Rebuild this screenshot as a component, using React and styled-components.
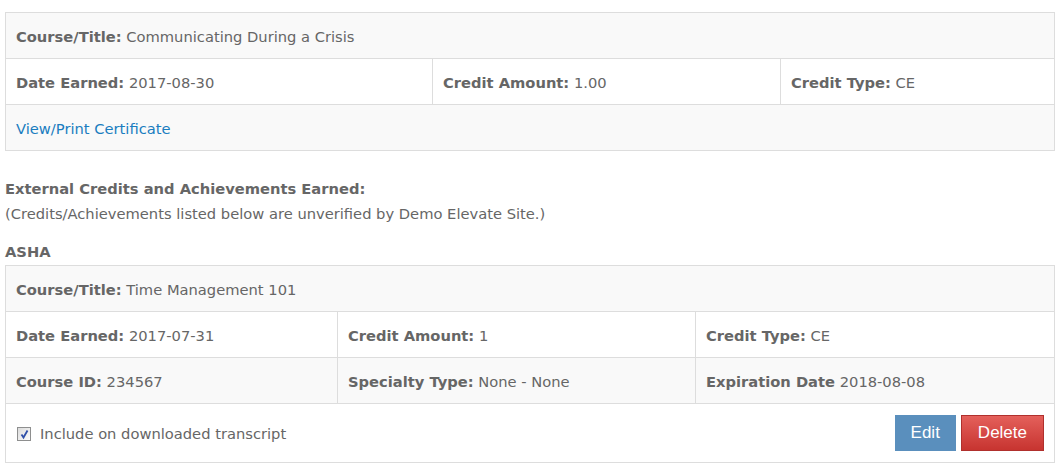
import React from "react";
import styled, { createGlobalStyle } from "styled-components";

const GlobalStyle = createGlobalStyle`
  body {
    margin: 0;
    background: #ffffff;
    font-family: "DejaVu Sans", Verdana, sans-serif;
    font-size: 14.7px;
    color: #666666;
  }
`;

const firstTable = [
  [{ label: "Course/Title:", value: "Communicating During a Crisis" }],
  [
    { label: "Date Earned:", value: "2017-08-30" },
    { label: "Credit Amount:", value: "1.00" },
    { label: "Credit Type:", value: "CE" },
  ],
];

const ashaRows = [
  [{ label: "Course/Title:", value: "Time Management 101" }],
  [
    { label: "Date Earned:", value: "2017-07-31" },
    { label: "Credit Amount:", value: "1" },
    { label: "Credit Type:", value: "CE" },
  ],
  [
    { label: "Course ID:", value: "234567" },
    { label: "Specialty Type:", value: "None - None" },
    { label: "Expiration Date", value: "2018-08-08" },
  ],
];

const App = () => {
  return (
    <Page>
      <GlobalStyle />
      <Table>
        {firstTable.map((cells, i) => (
          <Row key={i} $striped={i % 2 === 0} $cols={cells.length === 1 ? "1fr" : "426px 348px 1fr"}>
            {cells.map((c) => (
              <Cell key={c.label}>
                <Label>{c.label}</Label> {c.value}
              </Cell>
            ))}
          </Row>
        ))}
        <Row $striped $cols="1fr">
          <Cell>
            <Link href="#">View/Print Certificate</Link>
          </Cell>
        </Row>
      </Table>

      <SectionTitle>External Credits and Achievements Earned:</SectionTitle>
      <Note>(Credits/Achievements listed below are unverified by Demo Elevate Site.)</Note>
      <GroupTitle>ASHA</GroupTitle>

      <Table>
        {ashaRows.map((cells, i) => (
          <Row key={i} $striped={i % 2 === 0} $cols={cells.length === 1 ? "1fr" : "331px 358px 1fr"}>
            {cells.map((c) => (
              <Cell key={c.label}>
                <Label>{c.label}</Label> {c.value}
              </Cell>
            ))}
          </Row>
        ))}
        <FooterRow>
          <CheckLabel>
            <CheckBox>
              <svg width="11" height="11" viewBox="0 0 11 11">
                <path d="M2.5 5.5 L4.5 8.5 L8.5 1.5" fill="none" stroke="#2f4fa8" strokeWidth="1.8" />
              </svg>
            </CheckBox>
            Include on downloaded transcript
          </CheckLabel>
          <Actions>
            <Button $variant="edit">Edit</Button>
            <Button $variant="delete">Delete</Button>
          </Actions>
        </FooterRow>
      </Table>
    </Page>
  );
};

export default App;

const Page = styled.div`
  padding: 12px 5px 0 5px;
  width: 1050px;
`;

const Table = styled.div`
  border: 1px solid #dddddd;
  box-sizing: border-box;
`;

const Row = styled.div`
  display: grid;
  grid-template-columns: ${(p) => p.$cols};
  background-color: ${(p) => (p.$striped ? "#f9f9f9" : "#ffffff")};
  & + & {
    border-top: 1px solid #dddddd;
  }
`;

const Cell = styled.div`
  padding: 13px 10px 11px 10px;
  line-height: 21px;
  white-space: nowrap;
  & + & {
    border-left: 1px solid #dddddd;
  }
`;

const Label = styled.span`
  font-weight: bold;
`;

const Link = styled.a`
  color: #1a7dc0;
  text-decoration: none;
`;

const SectionTitle = styled.div`
  margin-top: 28px;
  font-weight: bold;
  line-height: 20px;
`;

const Note = styled.div`
  margin-top: 5px;
  line-height: 20px;
`;

const GroupTitle = styled.div`
  margin-top: 18px;
  margin-bottom: 3px;
  font-weight: bold;
  line-height: 20px;
`;

const FooterRow = styled.div`
  display: flex;
  align-items: center;
  justify-content: space-between;
  border-top: 1px solid #dddddd;
  padding: 11px 10px 11px 11px;
  background: #ffffff;
`;

const CheckLabel = styled.label`
  display: flex;
  align-items: center;
  gap: 9px;
  line-height: 20px;
  margin-top: 2px;
`;

const CheckBox = styled.span`
  display: inline-flex;
  align-items: center;
  justify-content: center;
  width: 14px;
  height: 14px;
  box-sizing: border-box;
  border: 1px solid #8e8f8f;
  background: linear-gradient(to bottom right, #dcdcdc, #fbfbfb);
`;

const Actions = styled.div`
  display: flex;
  gap: 5px;
`;

const Button = styled.button`
  font-family: "Liberation Sans", Arial, sans-serif;
  font-size: 17px;
  color: #ffffff;
  height: 36px;
  padding: 0 ${(p) => (p.$variant === "edit" ? "15px" : "16px")};
  cursor: pointer;
  border: 1px solid ${(p) => (p.$variant === "edit" ? "#5a8fbd" : "#b0302d")};
  background: ${(p) =>
    p.$variant === "edit"
      ? "#5a8fbd"
      : "linear-gradient(to bottom, #e4605b 0%, #c73430 100%)"};
`;
